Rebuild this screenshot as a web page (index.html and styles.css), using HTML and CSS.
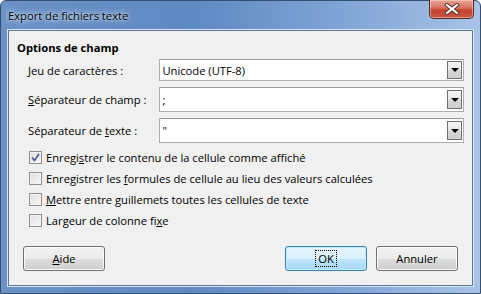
FILE: index.html
```html
<!DOCTYPE html>
<html lang="fr">
<head>
<meta charset="UTF-8">
<title>Export de fichiers texte</title>
<link rel="stylesheet" href="styles.css">
</head>
<body>
<div class="window">
  <div class="titlebar">
    <span class="title">Export de fichiers texte</span>
    <div class="close-btn">
      <svg width="16" height="12" viewBox="0 0 16 12">
        <path d="M3 2 L13 10 M13 2 L3 10" stroke="#4a2a24" stroke-width="4" stroke-linecap="square"/>
        <path d="M3 2 L13 10 M13 2 L3 10" stroke="#fff" stroke-width="2.2" stroke-linecap="square"/>
      </svg>
    </div>
  </div>

  <div class="client">
    <div class="group-title">Options de champ</div>

    <div class="field-row first">
      <label class="field-label"><u>J</u>eu de caractères :</label>
      <div class="combo combo-short">
        <span class="combo-text">Unicode (UTF-8)</span>
        <span class="drop-btn"><span class="arrow"></span></span>
      </div>
    </div>
    <div class="field-row">
      <label class="field-label"><u>S</u>éparateur de champ :</label>
      <div class="combo">
        <span class="combo-text">;</span>
        <span class="drop-btn"><span class="arrow"></span></span>
      </div>
    </div>
    <div class="field-row">
      <label class="field-label">Séparateur de <u>t</u>exte :</label>
      <div class="combo">
        <span class="combo-text">"</span>
        <span class="drop-btn"><span class="arrow"></span></span>
      </div>
    </div>

    <div class="checks">
      <div class="check-row">
        <span class="checkbox checked">
          <svg width="9" height="9" viewBox="0 0 9 9"><path d="M1 4.5 L3.5 7.5 L8 1" fill="none" stroke="#3d5596" stroke-width="1.6"/></svg>
        </span>
        <span>Enregi<u>s</u>trer le contenu de la cellule comme affiché</span>
      </div>
      <div class="check-row">
        <span class="checkbox"></span>
        <span>Enregistrer les <u>f</u>ormules de cellule au lieu des valeurs calculées</span>
      </div>
      <div class="check-row">
        <span class="checkbox"></span>
        <span><u>M</u>ettre entre guillemets toutes les cellules de texte</span>
      </div>
      <div class="check-row">
        <span class="checkbox"></span>
        <span>Largeur de colonne fi<u>x</u>e</span>
      </div>
    </div>

    <div class="button-row">
      <button class="btn"><u>A</u>ide</button>
      <div class="spacer"></div>
      <button class="btn btn-default"><span class="focus-ring">OK</span></button>
      <button class="btn">Annuler</button>
    </div>
  </div>
</div>
</body>
</html>
```

FILE: styles.css
```css
body {
    margin: 0;
    padding: 0;
    background: #ffffff;
    font-family: 'Open Sans', 'Noto Sans', sans-serif;
    font-size: 11.2px;
    line-height: 15px;
    color: #000;
}

/* Aero frame */
.window {
    width: 481px;
    height: 294px;
    box-sizing: border-box;
    border: 1px solid #35506f;
    border-radius: 6px 6px 0 0;
    background: linear-gradient(to right, #6b92c7 0%, #5f89c3 40%, #7fa3d6 70%, #a8c3e6 100%);
    padding: 0 7px 7px 7px;
    display: flex;
    flex-direction: column;
}

.titlebar {
    height: 29px;
    display: flex;
    align-items: flex-start;
    justify-content: space-between;
}

.title {
    margin-top: 7px;
    color: #000;
    text-shadow: 0 0 6px rgba(255, 255, 255, 0.9), 0 0 3px rgba(255, 255, 255, 0.8);
}

.close-btn {
    width: 45px;
    height: 19px;
    margin-right: -1px;
    margin-top: -1px;
    box-sizing: border-box;
    border: 1px solid #5a2b25;
    border-top: none;
    border-radius: 0 0 5px 5px;
    background: linear-gradient(to bottom, #e7a597 0%, #d7725f 45%, #c24330 55%, #c8553d 100%);
    box-shadow: inset 0 0 0 1px rgba(255, 220, 210, 0.5);
    display: flex;
    align-items: center;
    justify-content: center;
}

/* Dialog body */
.client {
    flex: 1;
    background: #f0f0f0;
    border: 1px solid #5d7796;
    box-shadow: 0 0 0 1px #d9e4f1;
    padding: 0 8px;
    display: flex;
    flex-direction: column;
}

.group-title {
    font-weight: bold;
    margin-top: 7px;
    height: 20px;
    line-height: 20px;
}

.field-row {
    display: flex;
    align-items: center;
    margin-top: 6px;
}

.field-row.first {
    margin-top: 1px;
}

.field-label {
    width: 132px;
    padding-left: 11px;
}

.combo {
    width: 306px;
    height: 25px;
    box-sizing: border-box;
    background: #fff;
    border: 1px solid #abadb3;
    border-top-color: #9c9c9c;
    display: flex;
    align-items: center;
    justify-content: space-between;
}

.combo-short {
    height: 22px;
}

.combo-text {
    padding-left: 2px;
}

.drop-btn {
    width: 15px;
    height: 19px;
    margin-right: 1px;
    box-sizing: border-box;
    border: 1px solid #707070;
    background: linear-gradient(to bottom, #f4f4f4 0%, #e6e6e6 50%, #d6d6d6 51%, #cfcfcf 100%);
    display: flex;
    align-items: center;
    justify-content: center;
}

.combo-short .drop-btn {
    height: 18px;
}

.arrow {
    width: 0;
    height: 0;
    border-left: 4px solid transparent;
    border-right: 4px solid transparent;
    border-top: 4px solid #000;
}

.checks {
    margin-top: 4px;
    display: flex;
    flex-direction: column;
}

.check-row {
    height: 21px;
    display: flex;
    align-items: center;
    padding-left: 12px;
}

.checkbox {
    width: 13px;
    height: 13px;
    box-sizing: border-box;
    border: 1px solid #8f8f8f;
    background: linear-gradient(135deg, #dcdcdc 0%, #ededed 60%, #fafafa 100%);
    box-shadow: inset 0 0 0 1px #f4f4f4;
    margin-right: 4px;
    display: flex;
    align-items: center;
    justify-content: center;
}

.button-row {
    margin-top: 15px;
    display: flex;
    align-items: center;
    padding: 0 6px;
}

.spacer {
    flex: 1;
}

.btn {
    width: 82px;
    height: 25px;
    box-sizing: border-box;
    border: 1px solid #707070;
    border-radius: 3px;
    background: linear-gradient(to bottom, #f2f2f2 0%, #ebebeb 50%, #dddddd 51%, #cfcfcf 100%);
    box-shadow: inset 0 0 0 1px #fbfbfb;
    font-family: inherit;
    font-size: inherit;
    color: #000;
    padding: 0;
    margin-left: 9px;
}

.btn:first-child {
    margin-left: 0;
}

.btn-default {
    border-color: #3c7fb1;
    background: linear-gradient(to bottom, #eaf6fd 0%, #d9f0fc 50%, #bee6fd 51%, #a7d9f5 100%);
    box-shadow: inset 0 0 0 1px #bdf0ff;
}

.focus-ring {
    border: 1px dotted #000;
    padding: 0 2px;
}
```
